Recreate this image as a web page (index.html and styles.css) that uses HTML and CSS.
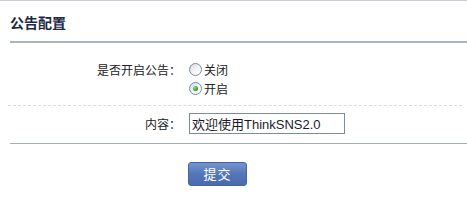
FILE: index.html
```html
<!DOCTYPE html>
<html>
<head>
<meta charset="utf-8">
<link rel="stylesheet" href="styles.css">
</head>
<body>
<div class="page">
  <div class="header"><h2 class="title">公告配置</h2></div>
  <div class="form">
    <div class="row row-radio">
      <div class="label">是否开启公告：</div>
      <div class="field">
        <label class="opt"><span class="radio"></span>关闭</label>
        <label class="opt"><span class="radio checked"></span>开启</label>
      </div>
    </div>
    <div class="row row-input">
      <div class="label">内容：</div>
      <div class="field">
        <input class="text" type="text" value="欢迎使用ThinkSNS2.0">
      </div>
    </div>
  </div>
  <div class="divider"></div>
  <div class="actions">
    <button class="btn" type="button">提交</button>
  </div>
</div>
</body>
</html>
```
FILE: styles.css
```css
html, body {
  margin: 0;
  padding: 0;
  background: #fff;
}
body {
  font-family: "Noto Sans CJK SC", "Liberation Sans", sans-serif;
  font-size: 12px;
  color: #222;
}
.page {
  border-top: 1px solid #c9ccd6;
  width: 467px;
}
.header {
  margin-left: 10px;
  height: 40px;
  border-bottom: 2px solid #a7b5c1;
  display: flex;
  align-items: center;
}
.title {
  margin: 0;
  font-size: 14px;
  font-weight: bold;
  color: #1c2947;
  line-height: 16px;
  padding-top: 1px;
}
.form {
  margin: 0 5px 0 8px;
}
.row {
  display: flex;
}
.row-radio {
  padding: 17px 0 7px;
  border-bottom: 1px dashed #dcdcdc;
  align-items: flex-start;
}
.row-input {
  padding: 7px 0 9px;
  align-items: center;
}
.label {
  width: 173px;
  text-align: right;
  line-height: 19px;
  color: #222;
}
.field {
  padding-left: 8px;
  display: flex;
  flex-direction: column;
}
.opt {
  display: flex;
  align-items: center;
  height: 19px;
  line-height: 19px;
}
.radio {
  width: 11px;
  height: 11px;
  border: 1px solid #7b8ba3;
  border-radius: 50%;
  background: linear-gradient(135deg, #d6d9df 0%, #f4f5f7 55%, #ffffff 100%);
  margin-right: 2px;
  position: relative;
  box-sizing: content-box;
}
.radio.checked::after {
  content: "";
  position: absolute;
  left: 3px;
  top: 3px;
  width: 5px;
  height: 5px;
  border-radius: 50%;
  background: radial-gradient(circle at 35% 35%, #8fe08f 0%, #2fa52f 60%, #1c7a1c 100%);
}
.text {
  width: 150px;
  height: 19px;
  margin: 0;
  padding: 0 2px;
  border: 1px solid #7d8a99;
  font-family: "Liberation Sans", "Noto Sans CJK SC", sans-serif;
  font-size: 13px;
  color: #1a1a2a;
  box-sizing: content-box;
}
.divider {
  margin-left: 10px;
  border-top: 1px solid #a3adba;
}
.actions {
  padding: 18px 0 0 188px;
}
.btn {
  width: 59px;
  height: 24px;
  margin: 0;
  padding: 0;
  border: 1px solid #4464a0;
  border-radius: 3px;
  background: linear-gradient(#7595d0, #5476b8 50%, #4a6aad);
  color: #fff;
  font-family: "Noto Sans CJK SC", sans-serif;
  font-size: 13px;
  line-height: 22px;
  letter-spacing: 1px;
}
```
